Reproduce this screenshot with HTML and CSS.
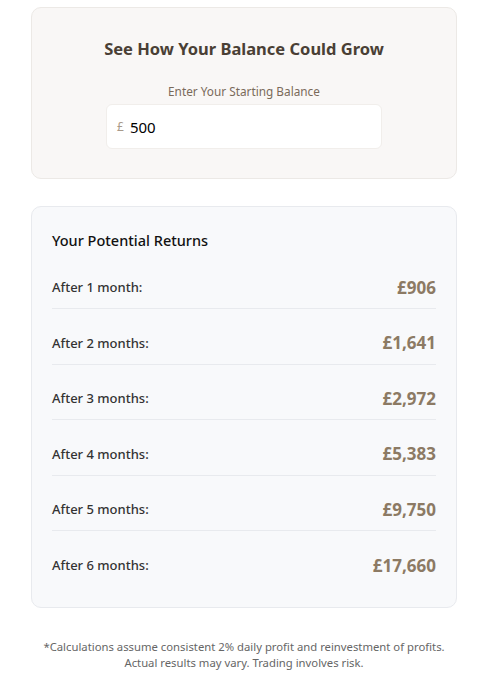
FILE: index.html
```html
<!DOCTYPE html>
<html lang="en">
<head>
<meta charset="utf-8">
<link rel="stylesheet" href="styles.css">
</head>
<body>
<div class="page">
  <section class="card calc">
    <h2 class="title">See How Your Balance Could Grow</h2>
    <div class="label">Enter Your Starting Balance</div>
    <div class="input">
      <span class="cur">£</span>
      <span class="val">500</span>
    </div>
  </section>
  <section class="card returns">
    <h3 class="rtitle">Your Potential Returns</h3>
    <div class="row"><span class="k">After 1 month:</span><span class="v">£906</span></div>
    <div class="row"><span class="k">After 2 months:</span><span class="v">£1,641</span></div>
    <div class="row"><span class="k">After 3 months:</span><span class="v">£2,972</span></div>
    <div class="row"><span class="k">After 4 months:</span><span class="v">£5,383</span></div>
    <div class="row"><span class="k">After 5 months:</span><span class="v">£9,750</span></div>
    <div class="row last"><span class="k">After 6 months:</span><span class="v">£17,660</span></div>
  </section>
  <p class="note">*Calculations assume consistent 2% daily profit and reinvestment of profits.<br>Actual results may vary. Trading involves risk.</p>
</div>
</body>
</html>
```
FILE: styles.css
```css
* { box-sizing: border-box; }
body {
  margin: 0;
  background: #ffffff;
  font-family: "Noto Sans", "Open Sans", sans-serif;
}
.page {
  width: 426px;
  margin-left: 31px;
  padding-top: 7px;
}
.card {
  border-radius: 10px;
  border: 1px solid #ece9e6;
}
.calc {
  background: #f9f7f6;
  height: 172px;
  padding-top: 29px;
  display: flex;
  flex-direction: column;
  align-items: center;
}
.title {
  margin: 0;
  font-size: 16.5px;
  font-weight: 700;
  color: #4a3f35;
  line-height: 24px;
}
.label {
  margin-top: 21px;
  font-size: 11.8px;
  color: #7a6a5a;
  line-height: 18px;
}
.input {
  margin-top: 4px;
  width: 276px;
  height: 45px;
  background: #ffffff;
  border-radius: 6px;
  border: 1px solid #f1eeeb;
  display: flex;
  align-items: center;
  padding-left: 10px;
}
.cur {
  font-size: 12px;
  color: #a8998a;
  margin-right: 6px;
}
.val {
  font-size: 15px;
  color: #000;
}
.returns {
  margin-top: 27px;
  background: #f8f9fb;
  border-color: #e8eaee;
  padding: 20px 20px 20px 20px;
}
.rtitle {
  margin: 0 0 13px 0;
  font-size: 14.5px;
  font-weight: 500;
  color: #111;
  line-height: 26px;
}
.row {
  display: flex;
  justify-content: space-between;
  align-items: center;
  height: 43px;
  margin-bottom: 12.5px;
  border-bottom: 1px solid #e8eaee;
}
.row.last { border-bottom: none; margin-bottom: 0; }
.k {
  font-size: 13px;
  font-weight: 500;
  color: #333;
}
.v {
  font-size: 17px;
  font-weight: 700;
  color: #8c7a64;
}
.note {
  margin: 31px 0 0 0;
  text-align: center;
  font-size: 11.3px;
  line-height: 16px;
  color: #666;
  white-space: nowrap;
}
```
